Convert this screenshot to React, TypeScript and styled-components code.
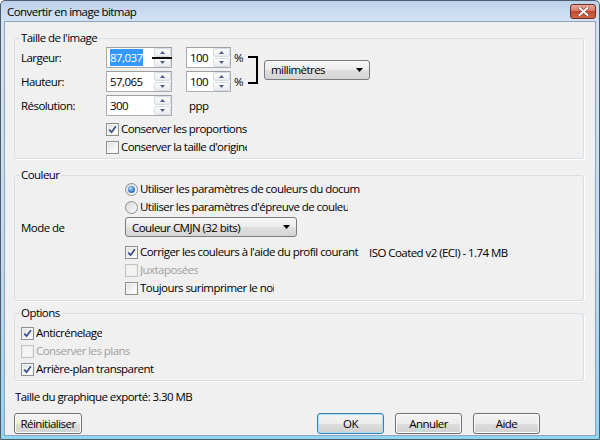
import styled, { createGlobalStyle } from "styled-components"

const GlobalStyle = createGlobalStyle`
  html, body { margin: 0; padding: 0; }
  body {
    font-family: "Open Sans", "Noto Sans", sans-serif;
    font-size: 11.5px;
    letter-spacing: -0.55px;
    color: #000;
    background: #fff;
  }
  * { box-sizing: border-box; }
`

const Window = styled.div`
  width: 600px;
  height: 440px;
  display: flex;
  flex-direction: column;
  border: 1px solid #4e5b6a;
  border-radius: 5px 5px 0 0;
  padding: 0 3px 3px;
  background: linear-gradient(#bcd2ec, #d4e3f4 20px, #c2d9ef 60%, #8fd4f0);
`

const TitleBar = styled.div`
  height: 20px;
  display: flex;
  align-items: flex-start;
  justify-content: space-between;
`

const Title = styled.div`
  padding: 2px 0 0 3px;
  line-height: 18px;
  font-size: 11.5px;
`

const CloseButton = styled.div`
  margin-top: 3px;
  width: 26px;
  height: 15px;
  border: 1px solid #6e2c22;
  border-radius: 3px;
  background: linear-gradient(#eaa998, #d77c66 45%, #c3482f 50%, #d0684c);
  display: flex;
  align-items: center;
  justify-content: center;
`

const Content = styled.div`
  flex: 1;
  border: 1px solid #8da3bd;
  background: #f0f0f0;
  padding: 0 11px 0 9px;
  display: flex;
  flex-direction: column;
`

const Group = styled.fieldset<{ $top: number; $pt: number; $pb: number }>`
  margin: ${p => p.$top}px 0 0;
  padding: ${p => p.$pt}px 6px ${p => p.$pb}px;
  border: 1px solid #d5dfe5;
  border-radius: 3px;
  box-shadow: 1px 1px 0 #fff;
  min-width: 0;
`

const Legend = styled.legend`
  padding: 0 2px;
  margin-left: -2px;
  line-height: 10px;
`

const SizeGrid = styled.div`
  display: grid;
  grid-template-columns: 85px 66px 14px 45px 17px 10px 6px 106px;
  grid-template-rows: 21px 21px 21px;
  row-gap: 3px;
  align-items: center;
`

const Cell = styled.div<{ $col: string; $row: string }>`
  grid-column: ${p => p.$col};
  grid-row: ${p => p.$row};
  white-space: nowrap;
`

const SpinBox = styled.div<{ $col: string; $row: string }>`
  grid-column: ${p => p.$col};
  grid-row: ${p => p.$row};
  position: relative;
  height: 21px;
  display: flex;
  border: 1px solid #abadb3;
  border-top-color: #9c9ea3;
  background: #fff;
`

const SpinValue = styled.div`
  flex: 1;
  padding-left: 3px;
  line-height: 19px;
  white-space: nowrap;
  overflow: hidden;
`

const Selected = styled.span`
  background: #3399ff;
  color: #fff;
  padding: 1px 0;
`

const Spinner = styled.div`
  width: 18px;
  display: flex;
  flex-direction: column;
  gap: 1px;
  padding: 0 0 0 1px;
`

const SpinBtn = styled.div`
  flex: 1;
  border: 1px solid #d6dbe1;
  border-radius: 2px;
  background: linear-gradient(#fbfbfb, #e9ecef);
  display: flex;
  align-items: center;
  justify-content: center;
`

const Stroke = styled.span`
  position: absolute;
  top: 9px;
  right: -1px;
  width: 20px;
  height: 2px;
  background: #111;
`

const Unit = styled(Cell)`
  padding-left: 3px;
`

const Bracket = styled.span`
  grid-column: 6;
  grid-row: 1 / span 2;
  align-self: center;
  height: 28px;
  width: 10px;
  border: 2px solid #000;
  border-left: none;
`

const Combo = styled.div<{ $w: number; $col?: string; $row?: string }>`
  ${p => (p.$col ? `grid-column: ${p.$col};` : "")}
  ${p => (p.$row ? `grid-row: ${p.$row};` : "")}
  align-self: center;
  width: ${p => p.$w}px;
  height: 20px;
  border: 1px solid #7a7a7a;
  border-radius: 3px;
  background: linear-gradient(#f7f7f7, #ececec 50%, #dfdfdf 50%, #d5d5d5);
  display: flex;
  align-items: center;
  justify-content: space-between;
  padding: 0 6px 0 6px;
  white-space: nowrap;
`

const OptionList = styled.div<{ $indent: number; $mt: number }>`
  display: flex;
  flex-direction: column;
  padding-left: ${p => p.$indent}px;
  margin-top: ${p => p.$mt}px;
`

const Row = styled.div<{ $h?: number; $indent?: number; $mt?: number }>`
  display: flex;
  align-items: center;
  height: ${p => p.$h ?? 18}px;
  padding-left: ${p => p.$indent ?? 0}px;
  margin-top: ${p => p.$mt ?? 0}px;
`

const ModeLabel = styled.span`
  width: 104px;
  flex: none;
`

const Box = styled.span<{ $disabled?: boolean }>`
  flex: none;
  width: 13px;
  height: 13px;
  border: 1px solid ${p => (p.$disabled ? "#c3c3c3" : "#8e8f8f")};
  background: ${p =>
    p.$disabled
      ? "#f4f4f4"
      : "linear-gradient(135deg, #dcdcdc, #f6f6f6 60%, #ffffff)"};
  box-shadow: inset 0 0 0 1px ${p => (p.$disabled ? "#ececec" : "#f4f4f4")};
  display: flex;
  align-items: center;
  justify-content: center;
`

const Radio = styled.span<{ $on?: boolean }>`
  flex: none;
  width: 13px;
  height: 13px;
  border-radius: 50%;
  border: 1px solid #8e8f8f;
  background: linear-gradient(135deg, #d8d8d8, #fbfbfb);
  display: flex;
  align-items: center;
  justify-content: center;
  &::after {
    content: "";
    display: ${p => (p.$on ? "block" : "none")};
    width: 7px;
    height: 7px;
    border-radius: 50%;
    background: radial-gradient(circle at 40% 35%, #b9def8 0, #3a7cc8 55%, #1d4f91 100%);
  }
`

const OptText = styled.span<{ $w?: number; $disabled?: boolean }>`
  margin-left: 2px;
  white-space: nowrap;
  overflow: hidden;
  line-height: 16px;
  ${p => (p.$w ? `width: ${p.$w}px; flex: none;` : "")}
  color: ${p => (p.$disabled ? "#a0a0a0" : "#000")};
`

const Plain = styled.div<{ $mt: number }>`
  margin-top: ${p => p.$mt}px;
  padding-left: 1px;
  line-height: 16px;
`

const ButtonRow = styled.div`
  margin-top: 8px;
  display: flex;
  align-items: center;
`

const ButtonGroup = styled.div`
  margin-left: auto;
  margin-right: 44px;
  display: flex;
  gap: 11px;
`

const Button = styled.div<{ $w: number; $default?: boolean }>`
  width: ${p => p.$w}px;
  height: 21px;
  border: 1px solid ${p => (p.$default ? "#3c7fb1" : "#707070")};
  border-radius: 3px;
  background: linear-gradient(#f4f4f4, #ececec 50%, #dedede 50%, #d1d1d1);
  box-shadow: inset 0 0 0 1px ${p => (p.$default ? "#a8e2fa" : "#fbfbfb")};
  display: flex;
  align-items: center;
  justify-content: center;
  line-height: 16px;
`

const ArrowDown = () => (
  <svg width="7" height="4" viewBox="0 0 7 4">
    <path d="M0 0h7L3.5 4z" fill="#000" />
  </svg>
)

const SpinArrow = ({ up }: { up?: boolean }) => (
  <svg width="5" height="3" viewBox="0 0 5 3">
    <path d={up ? "M0 3h5L2.5 0z" : "M0 0h5L2.5 3z"} fill="#4b5e82" />
  </svg>
)

const Check = () => (
  <svg width="9" height="9" viewBox="0 0 9 9">
    <path d="M1.2 4.6 L3.6 7.2 L7.9 1.2" fill="none" stroke="#3a4d8c" strokeWidth="1.7" />
  </svg>
)

type SpinProps = { col: string; row: string; children: React.ReactNode; marked?: boolean }

const Spin = ({ col, row, children, marked }: SpinProps) => (
  <SpinBox $col={col} $row={row}>
    <SpinValue>{children}</SpinValue>
    <Spinner>
      <SpinBtn><SpinArrow up /></SpinBtn>
      <SpinBtn><SpinArrow /></SpinBtn>
    </Spinner>
    {marked && <Stroke />}
  </SpinBox>
)

type OptionProps = { checked?: boolean; disabled?: boolean; w?: number; children: React.ReactNode }

const CheckOption = ({ checked, disabled, w, children }: OptionProps) => (
  <>
    <Box $disabled={disabled}>{checked && <Check />}</Box>
    <OptText $w={w} $disabled={disabled}>{children}</OptText>
  </>
)

const App = () => {
  return (
    <>
      <GlobalStyle />
      <Window>
        <TitleBar>
          <Title>Convertir en image bitmap</Title>
          <CloseButton>
            <svg width="11" height="9" viewBox="0 0 11 9">
              <path d="M1.5 1 L9.5 8 M9.5 1 L1.5 8" stroke="#7a3a30" strokeWidth="3.2" strokeLinecap="round" />
              <path d="M1.5 1 L9.5 8 M9.5 1 L1.5 8" stroke="#fff" strokeWidth="2" strokeLinecap="round" />
            </svg>
          </CloseButton>
        </TitleBar>
        <Content>
          <Group $top={11} $pt={4} $pb={2}>
            <Legend>Taille de l'image</Legend>
            <SizeGrid>
              <Cell $col="1" $row="1">Largeur:</Cell>
              <Spin col="2" row="1" marked><Selected>87,037</Selected></Spin>
              <Spin col="4" row="1">100</Spin>
              <Unit $col="5" $row="1">%</Unit>
              <Bracket />
              <Combo $w={106} $col="8" $row="1 / span 2">
                <span>millimètres</span>
                <ArrowDown />
              </Combo>

              <Cell $col="1" $row="2">Hauteur:</Cell>
              <Spin col="2" row="2">57,065</Spin>
              <Spin col="4" row="2">100</Spin>
              <Unit $col="5" $row="2">%</Unit>

              <Cell $col="1" $row="3">Résolution:</Cell>
              <Spin col="2" row="3">300</Spin>
              <Unit $col="4 / span 2" $row="3">ppp</Unit>
            </SizeGrid>
            <OptionList $indent={85} $mt={4}>
              <Row><CheckOption checked w={126}>Conserver les proportions</CheckOption></Row>
              <Row><CheckOption w={126}>Conserver la taille d'origine</CheckOption></Row>
            </OptionList>
          </Group>

          <Group $top={11} $pt={0} $pb={3}>
            <Legend>Couleur</Legend>
            <Row $indent={104}>
              <Radio $on />
              <OptText $w={220}>Utiliser les paramètres de couleurs du document</OptText>
            </Row>
            <Row $indent={104}>
              <Radio />
              <OptText $w={208}>Utiliser les paramètres d'épreuve de couleur</OptText>
            </Row>
            <Row $h={22}>
              <ModeLabel>Mode de</ModeLabel>
              <Combo $w={172}>
                <span>Couleur CMJN (32 bits)</span>
                <ArrowDown />
              </Combo>
            </Row>
            <Row $indent={104} $mt={5}>
              <CheckOption checked w={229}>Corriger les couleurs à l'aide du profil courant</CheckOption>
              <span>ISO Coated v2 (ECI) - 1.74 MB</span>
            </Row>
            <Row $indent={104}>
              <CheckOption disabled>Juxtaposées</CheckOption>
            </Row>
            <Row $indent={104}>
              <CheckOption w={134}>Toujours surimprimer le noir</CheckOption>
            </Row>
          </Group>

          <Group $top={7} $pt={6} $pb={2}>
            <Legend>Options</Legend>
            <Row><CheckOption checked>Anticrénelage</CheckOption></Row>
            <Row><CheckOption disabled>Conserver les plans</CheckOption></Row>
            <Row><CheckOption checked>Arrière-plan transparent</CheckOption></Row>
          </Group>

          <Plain $mt={8}>Taille du graphique exporté: 3.30 MB</Plain>

          <ButtonRow>
            <Button $w={68}>Réinitialiser</Button>
            <ButtonGroup>
              <Button $w={67} $default>OK</Button>
              <Button $w={67}>Annuler</Button>
              <Button $w={67}>Aide</Button>
            </ButtonGroup>
          </ButtonRow>
        </Content>
      </Window>
    </>
  )
}

export default App
